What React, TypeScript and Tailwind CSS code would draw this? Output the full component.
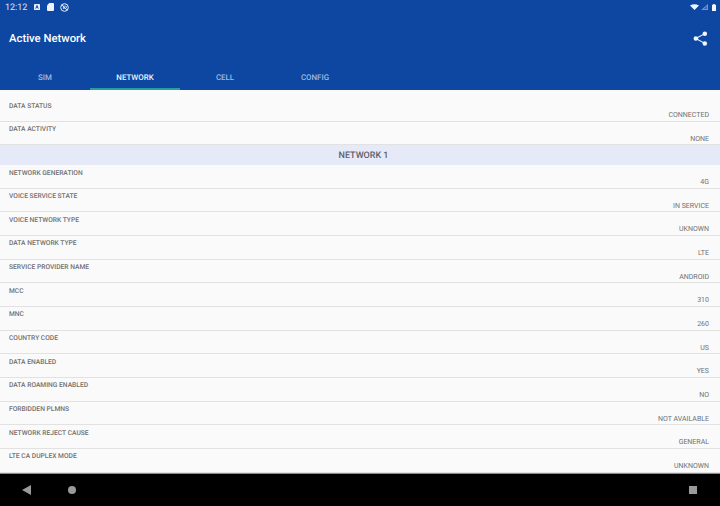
const rows: [string, string][] = [
  ["NETWORK GENERATION", "4G"],
  ["VOICE SERVICE STATE", "IN SERVICE"],
  ["VOICE NETWORK TYPE", "UKNOWN"],
  ["DATA NETWORK TYPE", "LTE"],
  ["SERVICE PROVIDER NAME", "ANDROID"],
  ["MCC", "310"],
  ["MNC", "260"],
  ["COUNTRY CODE", "US"],
  ["DATA ENABLED", "YES"],
  ["DATA ROAMING ENABLED", "NO"],
  ["FORBIDDEN PLMNS", "NOT AVAILABLE"],
  ["NETWORK REJECT CAUSE", "GENERAL"],
  ["LTE CA DUPLEX MODE", "UNKNOWN"],
];

function Row({ label, value }: { label: string; value: string }) {
  return (
    <div className="h-[23.67px] shrink-0 border-b border-[#e2e2e2] pl-[9px] pr-[11px] pt-[2.5px] flex flex-col">
      <div className="text-[6.7px] leading-[10px] font-medium text-[#707070]">{label}</div>
      <div className="text-[7px] leading-[10px] text-[#707070] text-right -mt-[0.5px]">{value}</div>
    </div>
  );
}

export default function App() {
  return (
    <div className="w-[720px] h-[506px] overflow-hidden flex flex-col bg-[#fafafa] font-['Roboto',sans-serif] [text-rendering:geometricPrecision]">
      <div className="h-[90px] shrink-0 bg-[#0d47a1] text-white flex flex-col">
        <div className="h-[14px] flex items-center justify-between pl-[5px] pr-[4px]">
          <div className="flex items-center">
            <span className="text-[9px] leading-[14px] text-[#dbe4f3] pt-px">12:12</span>
            <svg className="ml-[7px]" width="6" height="6" viewBox="0 0 7 7">
              <rect width="7" height="7" rx="1" fill="#e8eef8" />
              <path d="M2 5.5 3.5 1.6 5 5.5M2.6 4h1.8" stroke="#0d47a1" strokeWidth="1" fill="none" />
            </svg>
            <svg className="ml-[7px]" width="7" height="8" viewBox="0 0 7 8">
              <path d="M2.2 0H6a1 1 0 0 1 1 1v6a1 1 0 0 1-1 1H1a1 1 0 0 1-1-1V2.4Z" fill="#eef2fa" />
            </svg>
            <svg className="ml-[6px]" width="9" height="9" viewBox="0 0 9 9" fill="none">
              <circle cx="4.5" cy="4.5" r="3.8" stroke="#e8eef8" strokeWidth="1" />
              <path d="M1.8 1.8 7.2 7.2" stroke="#e8eef8" strokeWidth="0.9" />
              <path d="M3 3.2h2.6a1 1 0 0 1 0 2H3.6M3.4 6V3" stroke="#e8eef8" strokeWidth="0.8" />
            </svg>
          </div>
          <div className="flex items-center gap-[2px]">
            <svg width="9" height="6" viewBox="0 0 9 6">
              <path d="M0 1.6Q4.5-1.2 9 1.6L4.5 6Z" fill="#f2f5fb" />
            </svg>
            <svg width="7" height="6" viewBox="0 0 7 6">
              <path d="M7 0V6H0Z" fill="#f2f5fb" fillOpacity="0.45" />
              <path d="M6 2V5H2.6Z" fill="#0d47a1" fillOpacity="0.6" />
            </svg>
            <svg className="ml-[2px]" width="4" height="7" viewBox="0 0 4 7">
              <path d="M1.2 0h1.6v.7H4V7H0V.7h1.2Z" fill="#f2f5fb" />
            </svg>
          </div>
        </div>
        <div className="h-[48px] flex items-center justify-between pl-[9px] pr-[12px] pt-[3px]">
          <span className="text-[11.3px] font-medium">Active Network</span>
          <svg className="-mt-[3px]" width="15" height="15" viewBox="0 0 16 16" fill="#f4f6fb">
            <circle cx="12.6" cy="2.8" r="2.4" />
            <circle cx="3" cy="8" r="2.4" />
            <circle cx="12.6" cy="13.2" r="2.4" />
            <path d="M3 8 12.6 2.8M3 8l9.6 5.2" stroke="#f4f6fb" strokeWidth="1.2" />
          </svg>
        </div>
        <div className="h-[28px] flex">
          {["SIM", "NETWORK", "CELL", "CONFIG"].map((t) => (
            <div
              key={t}
              className={
                t === "NETWORK"
                  ? "w-[90px] h-full flex items-center justify-center text-[7.9px] font-medium text-[#f1f4fa] border-b-[2px] border-[#2a9d9d] pt-[5px]"
                  : "w-[90px] h-full flex items-center justify-center text-[7.9px] font-medium text-[#a0bbdf] border-b-[2px] border-transparent pt-[5px]"
              }
            >
              {t}
            </div>
          ))}
        </div>
      </div>
      <div className="flex-1 min-h-0 overflow-hidden flex flex-col pt-[8px]">
        <Row label="DATA STATUS" value="CONNECTED" />
        <Row label="DATA ACTIVITY" value="NONE" />
        <div className="h-[20px] shrink-0 -mt-[0.3px] bg-[#e6eaf8] flex items-center justify-center text-[9px] font-medium text-[#5b5f68] pl-[7px] pt-[3px]">
          NETWORK 1
        </div>
        {rows.map(([l, v]) => (
          <Row key={l} label={l} value={v} />
        ))}
      </div>
      <div className="h-[33px] shrink-0 bg-black border-t border-[#8a8a8a] relative flex items-center">
        <svg className="ml-[22px]" width="9" height="10" viewBox="0 0 9 10">
          <path d="M9 0V10L0 5Z" fill="#9a9a9a" />
        </svg>
        <div className="ml-[37px] w-[8px] h-[8px] rounded-full bg-[#9a9a9a]" />
        <div className="ml-auto mr-[23px] w-[8px] h-[8px] bg-[#9a9a9a]" />
      </div>
    </div>
  );
}
